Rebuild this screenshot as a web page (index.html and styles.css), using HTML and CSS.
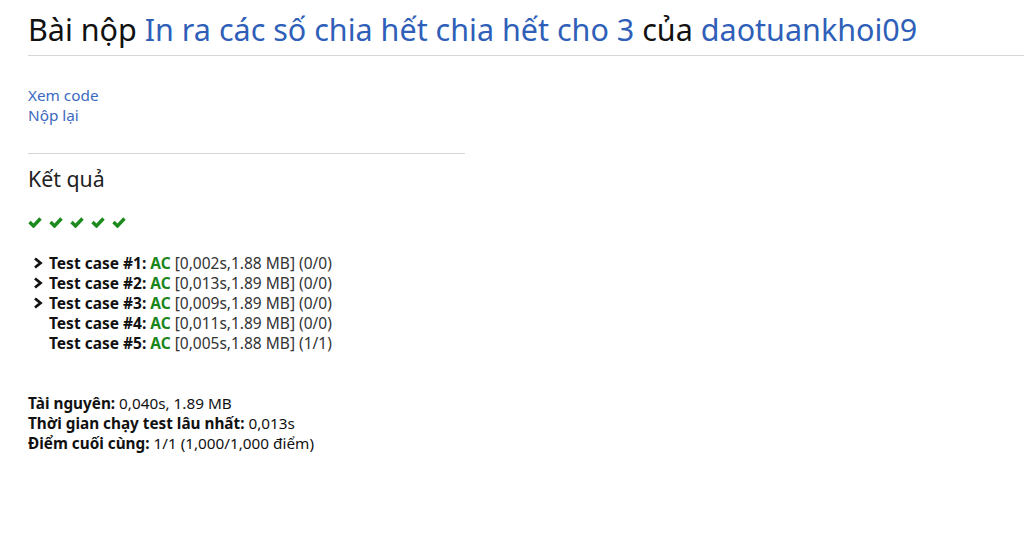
FILE: index.html
```html
<!DOCTYPE html>
<html lang="vi">
<head>
<meta charset="utf-8">
<title>Bài nộp</title>
<link rel="stylesheet" href="styles.css">
</head>
<body>
<div class="page">
  <h2 class="title">Bài nộp <a href="#">In ra các số chia hết chia hết cho 3</a> của <a href="#">daotuankhoi09</a></h2>
  <hr class="rule-full">
  <div class="content">
    <div class="links">
      <a href="#">Xem code</a>
      <a href="#">Nộp lại</a>
    </div>
    <hr class="rule-half">
    <h3 class="section">Kết quả</h3>
    <div class="checks">
      <svg class="check" viewBox="0 0 14 12" width="14" height="12"><path d="M1.5 6 L5.5 10 L12.5 2.5" fill="none" stroke="#1d8a1d" stroke-width="3.4"/></svg>
      <svg class="check" viewBox="0 0 14 12" width="14" height="12"><path d="M1.5 6 L5.5 10 L12.5 2.5" fill="none" stroke="#1d8a1d" stroke-width="3.4"/></svg>
      <svg class="check" viewBox="0 0 14 12" width="14" height="12"><path d="M1.5 6 L5.5 10 L12.5 2.5" fill="none" stroke="#1d8a1d" stroke-width="3.4"/></svg>
      <svg class="check" viewBox="0 0 14 12" width="14" height="12"><path d="M1.5 6 L5.5 10 L12.5 2.5" fill="none" stroke="#1d8a1d" stroke-width="3.4"/></svg>
      <svg class="check" viewBox="0 0 14 12" width="14" height="12"><path d="M1.5 6 L5.5 10 L12.5 2.5" fill="none" stroke="#1d8a1d" stroke-width="3.4"/></svg>
    </div>
    <div class="cases">
      <div class="case"><span class="chev"><svg viewBox="0 0 10 12" width="10" height="12"><path d="M2 1.5 L7.5 6 L2 10.5" fill="none" stroke="#111" stroke-width="2.8"/></svg></span><b>Test case #1:</b> <span class="ac">AC</span> <span class="meta">[0,002s,1.88 MB] (0/0)</span></div>
      <div class="case"><span class="chev"><svg viewBox="0 0 10 12" width="10" height="12"><path d="M2 1.5 L7.5 6 L2 10.5" fill="none" stroke="#111" stroke-width="2.8"/></svg></span><b>Test case #2:</b> <span class="ac">AC</span> <span class="meta">[0,013s,1.89 MB] (0/0)</span></div>
      <div class="case"><span class="chev"><svg viewBox="0 0 10 12" width="10" height="12"><path d="M2 1.5 L7.5 6 L2 10.5" fill="none" stroke="#111" stroke-width="2.8"/></svg></span><b>Test case #3:</b> <span class="ac">AC</span> <span class="meta">[0,009s,1.89 MB] (0/0)</span></div>
      <div class="case"><span class="chev"></span><b>Test case #4:</b> <span class="ac">AC</span> <span class="meta">[0,011s,1.89 MB] (0/0)</span></div>
      <div class="case"><span class="chev"></span><b>Test case #5:</b> <span class="ac">AC</span> <span class="meta">[0,005s,1.88 MB] (1/1)</span></div>
    </div>
    <div class="summary">
      <div><b>Tài nguyên:</b> 0,040s, 1.89 MB</div>
      <div><b>Thời gian chạy test lâu nhất:</b> 0,013s</div>
      <div><b>Điểm cuối cùng:</b> 1/1 (1,000/1,000 điểm)</div>
    </div>
  </div>
</div>
</body>
</html>
```
FILE: styles.css
```css
html, body {
  margin: 0;
  padding: 0;
  background: #fff;
}
body {
  font-family: "Noto Sans", "Open Sans", sans-serif;
  color: #111;
  font-size: 15px;
  line-height: 20px;
}
a {
  color: #2f5fb8;
  text-decoration: none;
}
.page {
  padding-left: 28px;
}
.title {
  margin: 0;
  padding-top: 9px;
  font-weight: 400;
  font-size: 30.5px;
  line-height: 40px;
  color: #111;
}
.rule-full {
  margin: 6px 0 0 0;
  border: 0;
  border-top: 1px solid #d6d6d6;
}
.content {
  padding-top: 29px;
}
.links {
  display: flex;
  flex-direction: column;
  align-items: flex-start;
  font-size: 15.3px;
  line-height: 20px;
}
.links a {
  color: #3b69c0;
}
.rule-half {
  width: 437px;
  margin: 28px 0 0 0;
  border: 0;
  border-top: 1px solid #d6d6d6;
}
.section {
  margin: 10px 0 0 0;
  font-weight: 400;
  font-size: 21.3px;
  line-height: 30px;
  color: #222;
}
.checks {
  display: flex;
  gap: 7px;
  margin-top: 20px;
  height: 16px;
  align-items: center;
}
.check {
  display: block;
}
.cases {
  margin-top: 23px;
  padding-left: 5px;
  font-size: 15.5px;
}
.case {
  white-space: nowrap;
  height: 20px;
}
.chev {
  display: inline-block;
  width: 16px;
  vertical-align: middle;
  line-height: 0;
  position: relative;
  top: -2px;
}
.ac {
  color: #1b861b;
  font-weight: 700;
}
.meta {
  color: #333;
}
.summary {
  margin-top: 40px;
  font-size: 15.3px;
}
```
